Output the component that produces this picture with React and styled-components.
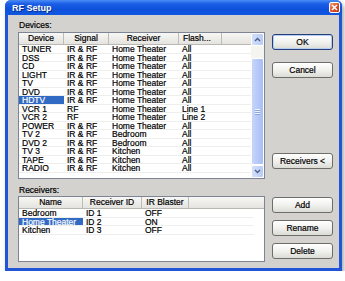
import React from "react";
import styled, { createGlobalStyle } from "styled-components";

const GlobalStyle = createGlobalStyle`
  html, body { margin: 0; padding: 0; background: #ffffff; }
  body {
    font-family: "Liberation Sans", Arial, sans-serif;
    color: #000;
    -webkit-text-stroke: 0.2px currentColor;
  }
`;

const Page = styled.div`
  padding: 0 0 0 5px;
`;

const Window = styled.div`
  width: 337px;
  height: 271px;
  box-sizing: border-box;
  display: flex;
  flex-direction: column;
  background: #1f55d6;
  border-radius: 6px 6px 0 0;
  box-shadow: 2px 3px 4px rgba(0, 0, 0, 0.35);
  overflow: hidden;
`;

const TitleBar = styled.div`
  height: 15px;
  flex: none;
  display: flex;
  align-items: center;
  padding: 0 2px 0 7px;
  background: linear-gradient(#4a8cf6 0%, #1c5fe6 25%, #0d50dc 60%, #1157e0 100%);
`;

const Title = styled.span`
  font-size: 9px;
  font-weight: bold;
  color: #fff;
  -webkit-text-stroke: 0;
  text-shadow: 1px 1px 0 #0a2f8a;
`;

const CloseButton = styled.div`
  margin-left: auto;
  width: 11px;
  height: 11px;
  box-sizing: border-box;
  border: 1px solid #fff;
  border-radius: 2px;
  background: linear-gradient(135deg, #f09a7a, #d9481f 60%, #c23a16);
  display: flex;
  align-items: center;
  justify-content: center;
`;

const Body = styled.div`
  flex: 1;
  margin: 0 3px 3px;
  background: #d3d2ce;
  padding: 5px 6px 6px 10px;
  display: flex;
  flex-direction: column;
  gap: 6px;
`;

const Section = styled.div`
  display: grid;
  grid-template-columns: 247px 61px;
  grid-template-rows: auto 1fr;
  column-gap: 7px;
  row-gap: ${(p) => p.$labelGap}px;
`;

const Label = styled.div`
  grid-column: 1 / 3;
  font-size: 8.5px;
  line-height: 10px;
  padding-left: 1px;
`;

const ListBox = styled.div`
  height: ${(p) => p.$height}px;
  box-sizing: border-box;
  border: 1px solid #7d8594;
  background: #fff;
  display: flex;
  overflow: hidden;
`;

const ListArea = styled.div`
  flex: 1;
  display: flex;
  flex-direction: column;
`;

const HeaderRow = styled.div`
  height: 12px;
  box-sizing: border-box;
  display: grid;
  grid-template-columns: ${(p) => p.$cols};
  background: linear-gradient(#f7f7f5, #e4e3df);
  border-bottom: 1px solid #b9b8b3;
`;

const HeaderCell = styled.div`
  font-size: 8.5px;
  line-height: 11px;
  text-align: ${(p) => (p.$left ? "left" : "center")};
  padding-left: ${(p) => (p.$left ? "4px" : "0")};
  border-right: ${(p) => (p.$last ? "none" : "1px solid #bdbcb6")};
  white-space: nowrap;
  overflow: hidden;
`;

const Rows = styled.div`
  padding-right: ${(p) => p.$pr || 0}px;
`;

const Row = styled.div`
  height: 8.5px;
  box-sizing: border-box;
  display: grid;
  grid-template-columns: ${(p) => p.$cols};
  border-bottom: 1px solid #eeeeec;
`;

const Cell = styled.div`
  font-size: 8.5px;
  line-height: 8px;
  padding-left: 3px;
  white-space: nowrap;
  overflow: hidden;
  background: ${(p) => (p.$sel ? "#316ac5" : "transparent")};
  color: ${(p) => (p.$sel ? "#fff" : "#000")};
`;

const ScrollBar = styled.div`
  width: 13px;
  flex: none;
  display: flex;
  flex-direction: column;
  background: #f4f4f0;
`;

const ArrowButton = styled.div`
  height: 13px;
  box-sizing: border-box;
  border: 1px solid #fff;
  border-radius: 2px;
  background: linear-gradient(90deg, #d2defc, #b9cbf6);
  display: flex;
  align-items: center;
  justify-content: center;
`;

const Track = styled.div`
  flex: 1;
  display: flex;
  flex-direction: column;
  padding-top: 12px;
`;

const Thumb = styled.div`
  flex: 1;
  box-sizing: border-box;
  border: 1px solid #fff;
  border-radius: 2px;
  background: linear-gradient(90deg, #c6d5fb, #a8bef4);
  display: flex;
  flex-direction: column;
  align-items: center;
  justify-content: center;
  gap: 1px;
`;

const GripLine = styled.div`
  width: 5px;
  height: 1px;
  background: #eef3fe;
  box-shadow: 0 1px 0 #8ca6e0;
`;

const ButtonColumn = styled.div`
  display: flex;
  flex-direction: column;
  gap: ${(p) => p.$gap}px;
  padding-top: ${(p) => p.$top}px;
`;

const Button = styled.div`
  height: 16px;
  box-sizing: border-box;
  border: 1px solid ${(p) => (p.$default ? "#23407a" : "#6d6d6a")};
  border-radius: 3px;
  background: linear-gradient(#ffffff, #f1f1ee 50%, #dcdcd6);
  box-shadow: ${(p) => (p.$default ? "inset 0 0 0 1px #b8cbf0" : "none")};
  font-size: 8.5px;
  line-height: 14px;
  text-align: center;
  margin-top: ${(p) => (p.$pushDown ? "auto" : "0")};
  margin-bottom: ${(p) => (p.$pushDown ? "10px" : "0")};
`;

const Chevron = ({ down }) => (
  <svg width="7" height="5" viewBox="0 0 7 5">
    <polyline
      points={down ? "1,1 3.5,3.5 6,1" : "1,4 3.5,1.5 6,4"}
      fill="none"
      stroke="#4d6185"
      strokeWidth="1.4"
    />
  </svg>
);

const devCols = "45px 45px 70px 43px 1fr";
const recCols = "64px 59px 47px 1fr";

const devices = [
  ["TUNER", "IR & RF", "Home Theater", "All"],
  ["DSS", "IR & RF", "Home Theater", "All"],
  ["CD", "IR & RF", "Home Theater", "All"],
  ["LIGHT", "IR & RF", "Home Theater", "All"],
  ["TV", "IR & RF", "Home Theater", "All"],
  ["DVD", "IR & RF", "Home Theater", "All"],
  ["HDTV", "IR & RF", "Home Theater", "All"],
  ["VCR 1", "RF", "Home Theater", "Line 1"],
  ["VCR 2", "RF", "Home Theater", "Line 2"],
  ["POWER", "IR & RF", "Home Theater", "All"],
  ["TV 2", "IR & RF", "Bedroom", "All"],
  ["DVD 2", "IR & RF", "Bedroom", "All"],
  ["TV 3", "IR & RF", "Kitchen", "All"],
  ["TAPE", "IR & RF", "Kitchen", "All"],
  ["RADIO", "IR & RF", "Kitchen", "All"],
];

const receivers = [
  ["Bedroom", "ID 1", "OFF"],
  ["Home Theater", "ID 2", "ON"],
  ["Kitchen", "ID 3", "OFF"],
];

export default function App() {
  return (
    <Page>
      <GlobalStyle />
      <Window>
        <TitleBar>
          <Title>RF Setup</Title>
          <CloseButton>
            <svg width="7" height="7" viewBox="0 0 7 7">
              <path d="M1 1 L6 6 M6 1 L1 6" stroke="#fff" strokeWidth="1.5" />
            </svg>
          </CloseButton>
        </TitleBar>
        <Body>
          <Section $labelGap={2}>
            <Label>Devices:</Label>
            <ListBox $height={147}>
              <ListArea>
                <HeaderRow $cols={devCols}>
                  <HeaderCell>Device</HeaderCell>
                  <HeaderCell>Signal</HeaderCell>
                  <HeaderCell>Receiver</HeaderCell>
                  <HeaderCell $left>Flash...</HeaderCell>
                  <HeaderCell $last />
                </HeaderRow>
                <Rows>
                  {devices.map((d) => (
                    <Row key={d[0]} $cols={devCols}>
                      <Cell $sel={d[0] === "HDTV"}>{d[0]}</Cell>
                      <Cell>{d[1]}</Cell>
                      <Cell>{d[2]}</Cell>
                      <Cell>{d[3]}</Cell>
                      <Cell />
                    </Row>
                  ))}
                </Rows>
              </ListArea>
              <ScrollBar>
                <ArrowButton>
                  <Chevron />
                </ArrowButton>
                <Track>
                  <Thumb>
                    <GripLine />
                    <GripLine />
                    <GripLine />
                  </Thumb>
                </Track>
                <ArrowButton>
                  <Chevron down />
                </ArrowButton>
              </ScrollBar>
            </ListBox>
            <ButtonColumn $gap={12} $top={2}>
              <Button $default>OK</Button>
              <Button>Cancel</Button>
              <Button $pushDown>Receivers &lt;</Button>
            </ButtonColumn>
          </Section>
          <Section $labelGap={1}>
            <Label>Receivers:</Label>
            <ListBox $height={66}>
              <ListArea>
                <HeaderRow $cols={recCols}>
                  <HeaderCell>Name</HeaderCell>
                  <HeaderCell>Receiver ID</HeaderCell>
                  <HeaderCell>IR Blaster</HeaderCell>
                  <HeaderCell $last />
                </HeaderRow>
                <Rows $pr={10}>
                  {receivers.map((r) => (
                    <Row key={r[0]} $cols={recCols}>
                      <Cell $sel={r[0] === "Home Theater"}>{r[0]}</Cell>
                      <Cell>{r[1]}</Cell>
                      <Cell>{r[2]}</Cell>
                      <Cell />
                    </Row>
                  ))}
                </Rows>
              </ListArea>
            </ListBox>
            <ButtonColumn $gap={7} $top={1}>
              <Button>Add</Button>
              <Button>Rename</Button>
              <Button>Delete</Button>
            </ButtonColumn>
          </Section>
        </Body>
      </Window>
    </Page>
  );
}
